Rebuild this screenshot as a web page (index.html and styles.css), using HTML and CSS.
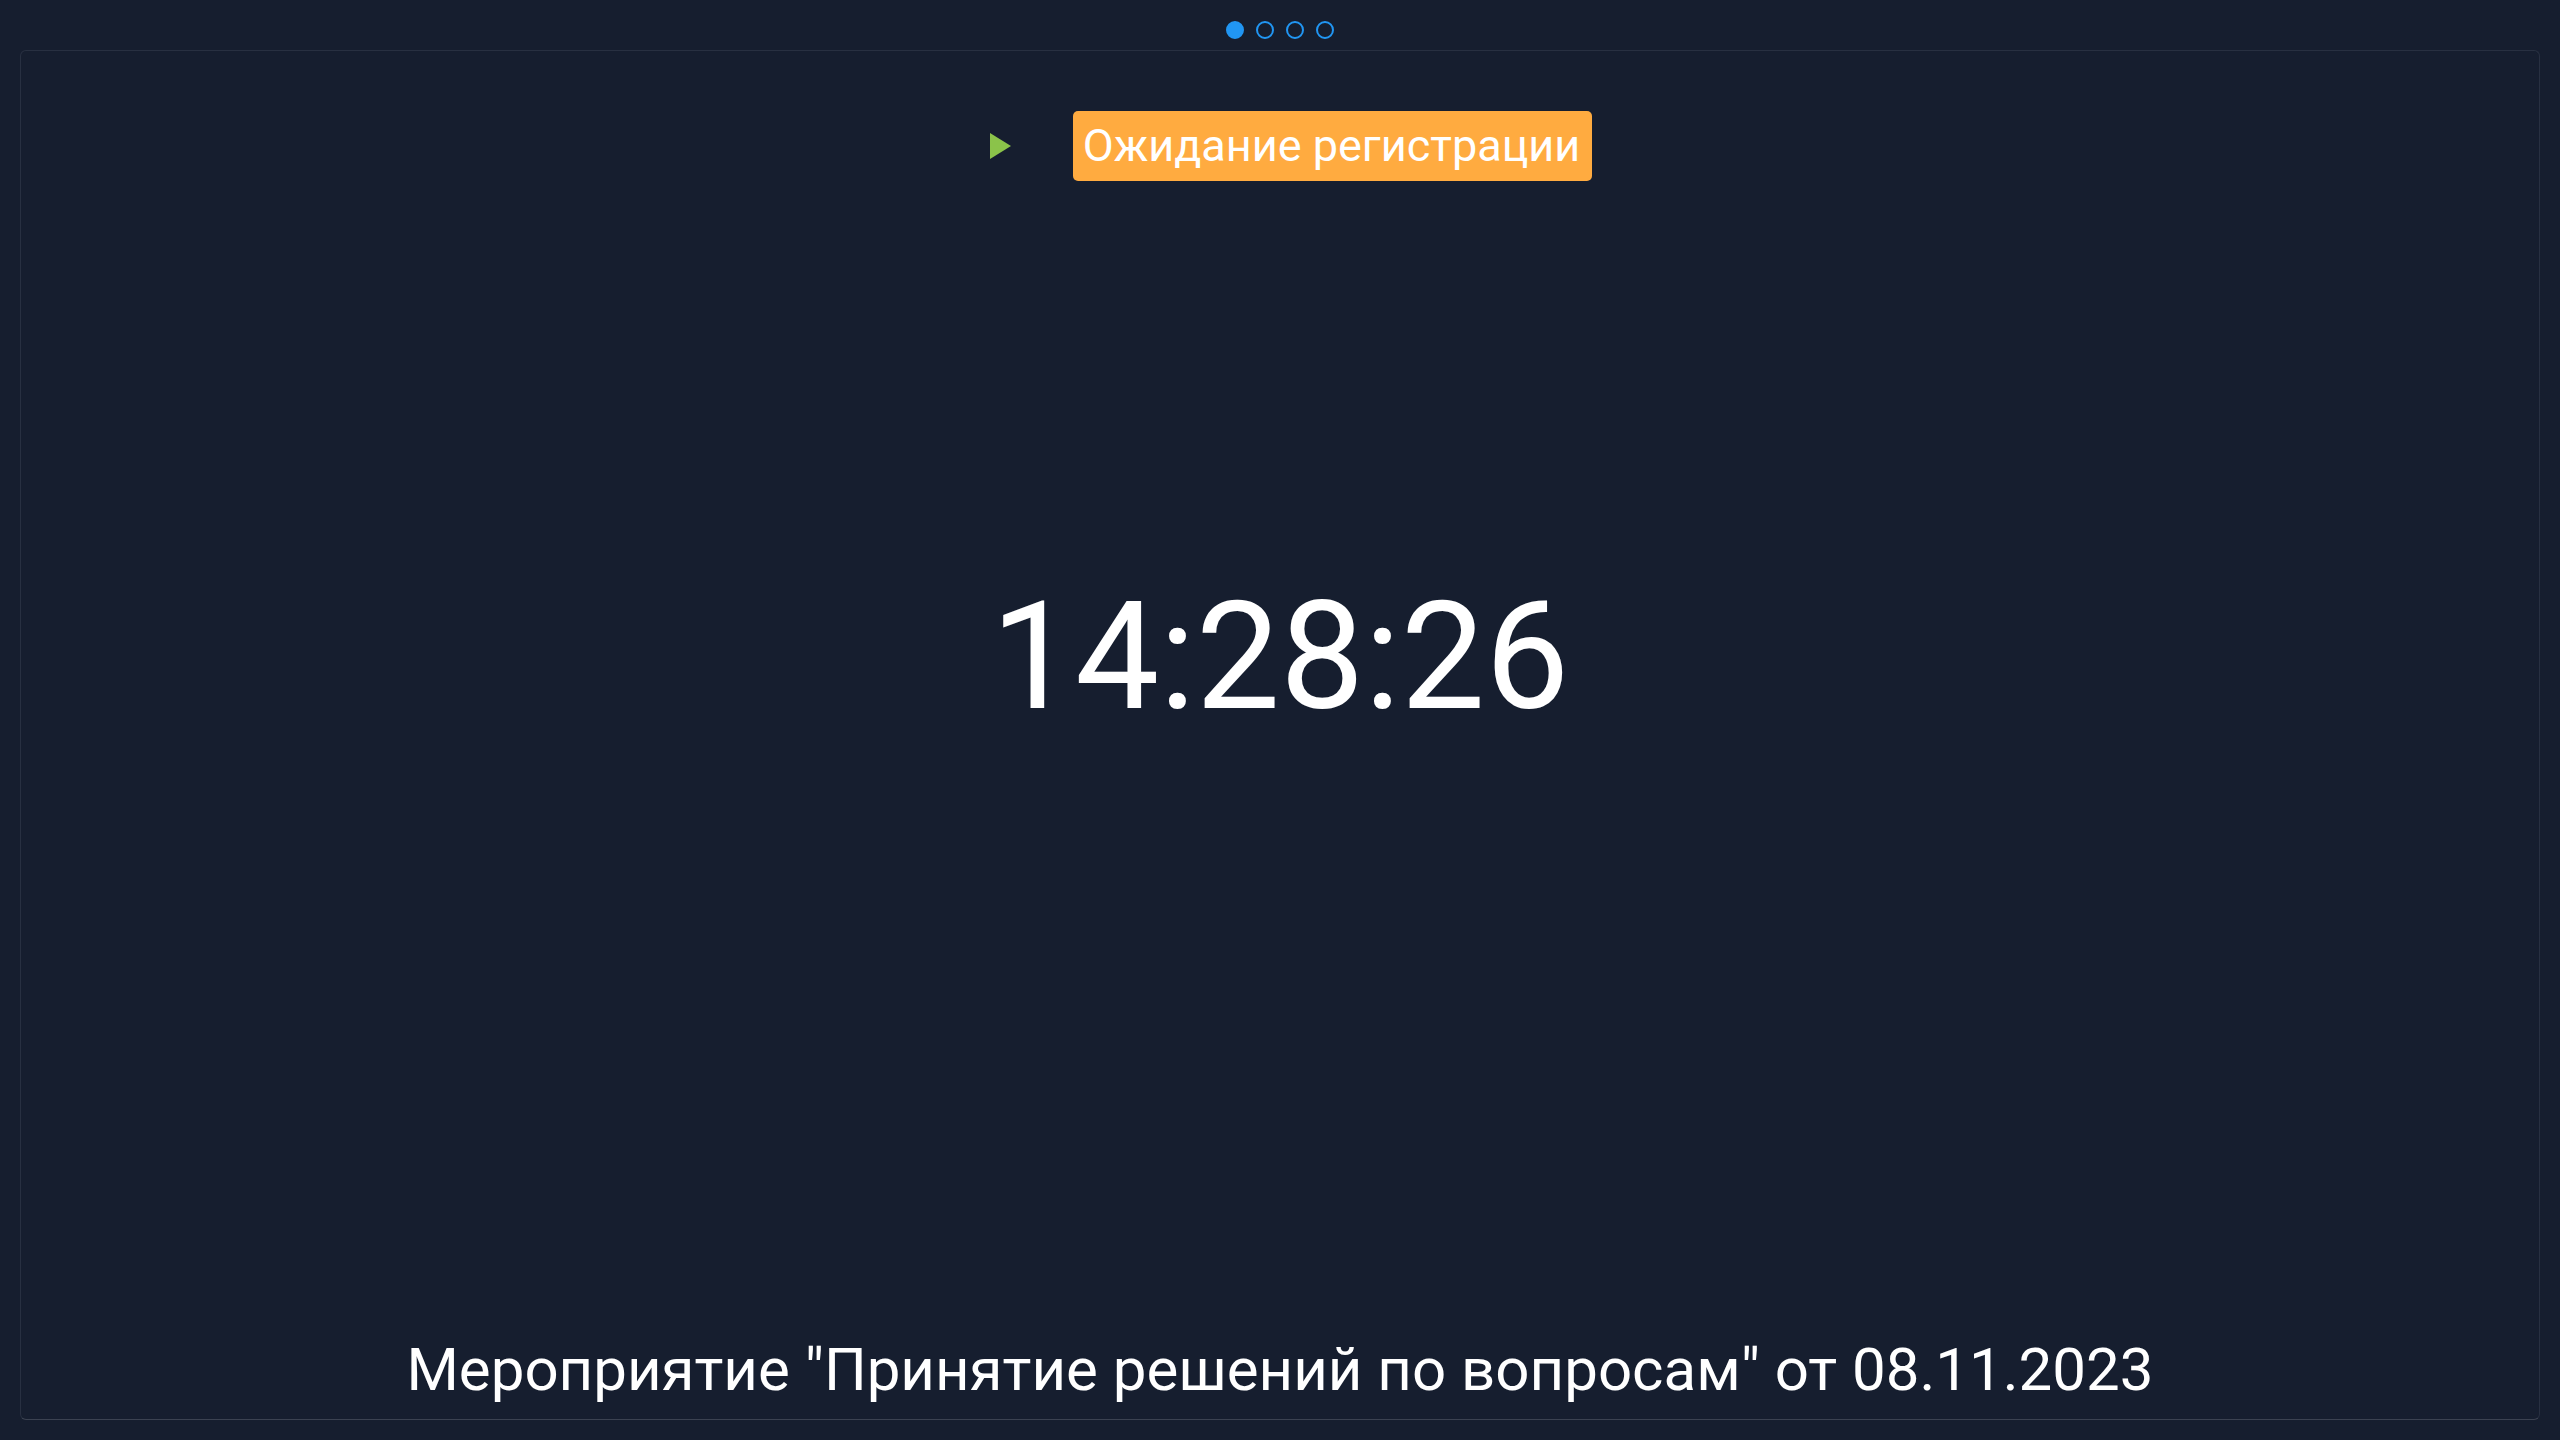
FILE: index.html
```html
<!DOCTYPE html>
<html lang="ru">
<head>
<meta charset="utf-8">
<title>Ожидание регистрации</title>
<link rel="stylesheet" href="styles.css">
</head>
<body>
  <div class="pager">
    <span class="dot dot-active"></span>
    <span class="dot"></span>
    <span class="dot"></span>
    <span class="dot"></span>
  </div>
  <main class="panel">
    <div class="status-row">
      <svg class="play" width="21" height="26" viewBox="0 0 21 26"><polygon points="0,0 21,13 0,26" fill="#8bc34a"/></svg>
      <span class="badge">Ожидание регистрации</span>
    </div>
    <div class="clock">14:28:26</div>
    <div class="footer">Мероприятие "Принятие решений по вопросам" от 08.11.2023</div>
  </main>
</body>
</html>
```

FILE: styles.css
```css
* { box-sizing: border-box; }
html, body {
  margin: 0;
  padding: 0;
  background: #161e2f;
  color: #ffffff;
  font-family: Roboto, "Noto Sans", "Liberation Sans", sans-serif;
}
body {
  width: 2560px;
  height: 1440px;
  overflow: hidden;
}
.pager {
  height: 50px;
  display: flex;
  justify-content: center;
  align-items: flex-start;
  gap: 12px;
  padding-top: 21px;
}
.dot {
  width: 18px;
  height: 18px;
  border-radius: 50%;
  border: 2px solid #2196f3;
}
.dot-active {
  background: #2196f3;
}
.panel {
  margin: 0 20px;
  height: 1370px;
  border: 1px solid #283041;
  border-bottom-color: #3b4251;
  border-radius: 6px;
  display: flex;
  flex-direction: column;
  align-items: center;
}
.status-row {
  margin-top: 60px;
  display: flex;
  align-items: center;
  padding-left: 22px;
}
.play {
  display: block;
  margin-right: 62px;
}
.badge {
  display: block;
  height: 70px;
  background: #ffab40;
  border-radius: 5px;
  font-size: 45px;
  line-height: 70px;
  padding: 0 12px 0 10px;
  white-space: nowrap;
}
.clock {
  margin-top: 401px;
  font-size: 150px;
  line-height: 1;
}
.footer {
  margin-top: auto;
  margin-bottom: 19px;
  font-size: 60px;
  line-height: 1;
  white-space: nowrap;
}
```
